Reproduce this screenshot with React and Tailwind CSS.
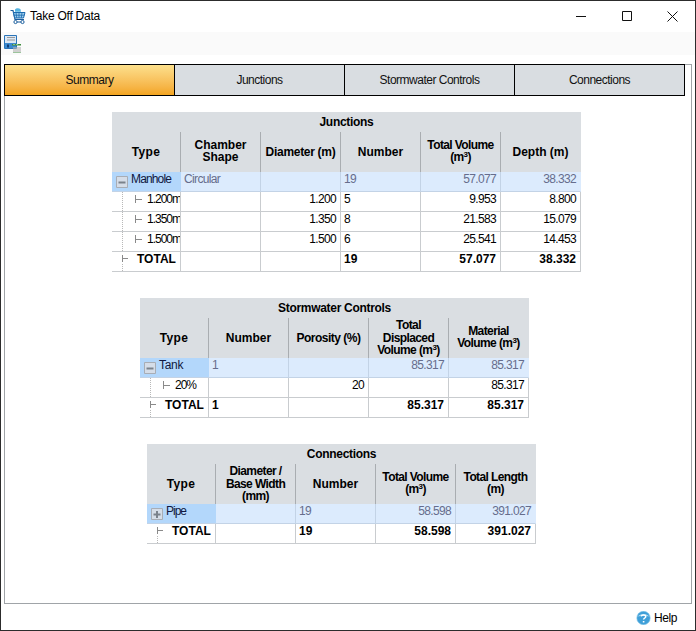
const CartIcon = () => (
  <svg width="16" height="17" viewBox="0 0 16 17" fill="none" className="shrink-0">
    <path d="M0.5 2.5H3L5 11.5H14" stroke="#1c5f9e" strokeWidth="1.2" />
    <path d="M3.5 4.5H15L13.5 10H4.7Z" fill="#9fd0ee" stroke="#1c6bb0" strokeWidth="1" />
    <path d="M6 4.5L6.8 10M9 4.5V10M12 4.5L11.3 10M4 7.2H14.3" stroke="#1c6bb0" strokeWidth="0.8" />
    <path d="M5 1.5C6 0 9 -0.2 10.5 1.2L11 3.8H5Z" fill="#56b4e0" />
    <circle cx="5.5" cy="14" r="1.6" fill="#fff" stroke="#1c5f9e" />
    <circle cx="12.5" cy="14" r="1.6" fill="#fff" stroke="#1c5f9e" />
    <path d="M7 14H11" stroke="#1c5f9e" />
  </svg>
);

const SaveIcon = () => (
  <svg width="18" height="18" viewBox="0 0 18 18" fill="none">
    <path d="M0.5 0.5H12.5V13.5H0.5Z" fill="#dce8f5" stroke="#2a74b8" />
    <path d="M1 8H12V13H1Z" fill="#3b8ad0" />
    <path d="M3 2.5H11M3 5H11" stroke="#9a9a9a" strokeWidth="1.2" />
    <path d="M3 9.5H5V12.5H3Z" fill="#123f78" />
    <path d="M8 9H17V10.5H8Z" fill="#3d8c3d" />
    <path d="M9.5 9.5H10.5M12.5 9.5H13.5" stroke="#d8f0d8" />
    <path d="M10 12V17M12 12V17M14 12V17M16 12V17" stroke="#b5b5b5" strokeWidth="1.2" />
    <path d="M9 17.5H17" stroke="#9cc49c" />
  </svg>
);

const HelpIcon = () => (
  <svg width="15" height="14" viewBox="0 0 15 14" fill="none" className="shrink-0">
    <circle cx="7.5" cy="7" r="6.7" fill="#3f9fd8" stroke="#7cc4ea" strokeWidth="0.6" />
    <path d="M2 5.5C3 2 12 2 13 5.5C10 4.5 5 4.5 2 5.5Z" fill="#a5d8f2" />
    <path d="M5.2 5.4C5.6 3.6 9.6 3.6 9.8 5.6C9.9 7 7.6 7 7.6 8.6" stroke="#fff" strokeWidth="1.5" />
    <path d="M6.8 10H8.4V11.5H6.8Z" fill="#fff" />
  </svg>
);

// caption buttons, each one a 46px slot like on Windows 10
const CaptionButtons = () => (
  <div className="ml-auto flex h-full">
    <div className="flex w-[46px] items-center justify-center pb-px">
      <svg width="10" height="10" viewBox="0 0 10 10" fill="none"><path d="M0 5.5H10" stroke="#111" /></svg>
    </div>
    <div className="flex w-[46px] items-center justify-center pb-px">
      <svg width="10" height="10" viewBox="0 0 10 10" fill="none"><path d="M0.5 0.5H9.5V9.5H0.5Z" stroke="#111" /></svg>
    </div>
    <div className="flex w-[45px] items-center justify-center pb-px">
      <svg width="11" height="11" viewBox="0 0 11 11" fill="none"><path d="M0.5 0.5L10.5 10.5M10.5 0.5L0.5 10.5" stroke="#111" /></svg>
    </div>
  </div>
);

// box with a minus or plus, first thing in a top level row
const Expander = ({ open }) => (
  <svg width="19" height="19" viewBox="0 0 19 19" fill="none" className="shrink-0">
    <path d="M4.5 4.5H15.5V15.5H4.5Z" fill="#d5dde8" stroke="#a8adb5" />
    <path d="M6.5 10.5H13.5" stroke="#7a828c" strokeWidth="2" />
    {!open && <path d="M10 7V14" stroke="#7a828c" strokeWidth="2" />}
  </svg>
);

const ChildGuide = () => (
  <svg width="35" height="19" viewBox="0 0 35 19" fill="none" className="shrink-0">
    <path d="M10.5 0V19" stroke="#b8b8b8" strokeDasharray="1 1" />
    <path d="M23.5 3V11M23.5 7.5H30" stroke="#8a8a8a" />
  </svg>
);

const TotalGuide = () => (
  <svg width="25" height="19" viewBox="0 0 25 19" fill="none" className="shrink-0">
    <path d="M10.5 3V10M10.5 6.5H16" stroke="#8a8a8a" />
    <path d="M10.5 12V19" stroke="#b8b8b8" strokeDasharray="1 1" />
  </svg>
);

const HeaderCell = ({ children, className = "" }) => (
  <div className={`flex h-10 items-center justify-center border-r border-[#a9adb1] bg-[#dadee2] text-center font-bold leading-[12.5px] text-black ${className}`}>
    <div>{children}</div>
  </div>
);

const Cell = ({ children, right, className = "" }) => (
  <div className={`h-5 border-r border-b border-[#c9cccf] pl-[3px] pr-1 leading-[15px] tracking-[-0.65px] ${right ? "text-right" : ""} ${className}`}>
    {children}
  </div>
);

const Cube = () => <sup className="text-[8px] leading-none">3</sup>;

const ParentRow = ({ label, labelClass = "tracking-[-0.85px]", open, cells }) => (
  <>
    <div className="flex h-5 border-b border-[#c3d3e6] bg-[#b3d7fb] text-[#101840]">
      <Expander open={open} />
      <span className={`leading-[15px] ${labelClass}`}>{label}</span>
    </div>
    {cells.map((c, i) => (
      <Cell key={i} right={c.right} className={`border-r-[#c3d3e6] border-b-[#c3d3e6] bg-[#dcebfd] text-[#666d8c] ${i === cells.length - 1 ? "border-r-[#dcebfd]" : ""}`}>
        {c.text}
      </Cell>
    ))}
  </>
);

const ChildRow = ({ label, cells }) => (
  <>
    <div className="flex h-5 overflow-hidden border-r border-b border-[#c9cccf] text-black">
      <ChildGuide />
      <span className="leading-[15px] tracking-[-1px]">{label}</span>
    </div>
    {cells.map((c, i) => (
      <Cell key={i} right={c.right} className="text-black">{c.text}</Cell>
    ))}
  </>
);

const TotalRow = ({ cells }) => (
  <>
    <div className="flex h-5 border-r border-b border-[#c9cccf] font-bold text-black">
      <TotalGuide />
      <span className="leading-[14px]">TOTAL</span>
    </div>
    {cells.map((c, i) => (
      <Cell key={i} right={c.right} className="font-bold leading-[14px] tracking-normal text-black">{c.text}</Cell>
    ))}
  </>
);

const Title = ({ children }) => (
  <div className="col-span-full flex h-5 items-center justify-center bg-[#dadee2] font-bold tracking-[-0.3px] text-black">
    {children}
  </div>
);

const R = (text) => ({ text, right: true });
const L = (text) => ({ text });

const Tabs = () => (
  <div className="-mt-px -ml-px flex">
    <div className="grid h-8 w-[681px] grid-cols-4 border-y border-l border-black tracking-[-0.5px] text-[#111]">
      <div className="flex items-center justify-center border-r border-black bg-gradient-to-b from-[#fce08c] to-[#f3a51f]">Summary</div>
      <div className="flex items-center justify-center border-r border-black bg-[#d9dde1]">Junctions</div>
      <div className="flex items-center justify-center border-r border-black bg-[#d9dde1]">Stormwater Controls</div>
      <div className="flex items-center justify-center border-r border-black bg-[#d9dde1]">Connections</div>
    </div>
  </div>
);

const App = () => {
  return (
    <div className="flex h-[631px] w-[696px] flex-col border border-[#2c2c2c] bg-white font-['Liberation_Sans',Arial,sans-serif] text-xs">
      <div className="flex h-[31px] items-center">
        <div className="ml-[9px]"><CartIcon /></div>
        <span className="mb-0.5 ml-[4px] tracking-[-0.25px] text-black">Take Off Data</span>
        <CaptionButtons />
      </div>

      <div className="flex h-[23px] items-center bg-[#fafafa] pl-[3px]">
        <SaveIcon />
      </div>

      <div className="mx-[3px] mt-[9px] flex h-[540px] flex-col border border-[#a0a4a8]">
        <Tabs />

        <div className="ml-[107px] mt-4 grid w-[469px] grid-cols-[69px_repeat(5,80px)]">
          <Title>Junctions</Title>
          <HeaderCell className="tracking-[0.3px]">Type</HeaderCell>
          <HeaderCell className="pb-0.5">Chamber<br />Shape</HeaderCell>
          <HeaderCell className="tracking-[-0.3px]">Diameter (m)</HeaderCell>
          <HeaderCell>Number</HeaderCell>
          <HeaderCell className="pb-0.5 tracking-[-0.6px]">Total Volume<br />(m<Cube />)</HeaderCell>
          <HeaderCell className="border-r-[#dadee2]">Depth (m)</HeaderCell>
          <ParentRow label="Manhole" open cells={[L("Circular"), L(""), L("19"), R("57.077"), R("38.332")]} />
          <ChildRow label="1.200m" cells={[L(""), R("1.200"), L("5"), R("9.953"), R("8.800")]} />
          <ChildRow label="1.350m" cells={[L(""), R("1.350"), L("8"), R("21.583"), R("15.079")]} />
          <ChildRow label="1.500m" cells={[L(""), R("1.500"), L("6"), R("25.541"), R("14.453")]} />
          <TotalRow cells={[L(""), L(""), L("19"), R("57.077"), R("38.332")]} />
        </div>

        <div className="ml-[135px] mt-[26px] grid w-[389px] grid-cols-[69px_repeat(4,80px)]">
          <Title>Stormwater Controls</Title>
          <HeaderCell className="tracking-[0.3px]">Type</HeaderCell>
          <HeaderCell>Number</HeaderCell>
          <HeaderCell className="tracking-[-0.5px]">Porosity (%)</HeaderCell>
          <HeaderCell className="tracking-[-0.6px]">Total<br />Displaced<br />Volume (m<Cube />)</HeaderCell>
          <HeaderCell className="border-r-[#dadee2] pb-0.5 tracking-[-0.6px]">Material<br />Volume (m<Cube />)</HeaderCell>
          <ParentRow label="Tank" labelClass="tracking-[-0.3px]" open cells={[L("1"), L(""), R("85.317"), R("85.317")]} />
          <ChildRow label="20%" cells={[L(""), R("20"), L(""), R("85.317")]} />
          <TotalRow cells={[L("1"), L(""), R("85.317"), R("85.317")]} />
        </div>

        <div className="ml-[142px] mt-[26px] grid w-[389px] grid-cols-[69px_repeat(4,80px)]">
          <Title>Connections</Title>
          <HeaderCell className="tracking-[0.3px]">Type</HeaderCell>
          <HeaderCell className="tracking-[-0.6px]">Diameter /<br />Base Width<br />(mm)</HeaderCell>
          <HeaderCell>Number</HeaderCell>
          <HeaderCell className="pb-0.5 tracking-[-0.6px]">Total Volume<br />(m<Cube />)</HeaderCell>
          <HeaderCell className="border-r-[#dadee2] pb-0.5 tracking-[-0.6px]">Total Length<br />(m)</HeaderCell>
          <ParentRow label="Pipe" labelClass="tracking-[-1px]" cells={[L(""), L("19"), R("58.598"), R("391.027")]} />
          <TotalRow cells={[L(""), L("19"), R("58.598"), R("391.027")]} />
        </div>
      </div>

      <div className="flex flex-1 items-center justify-end pr-[18px] pt-px text-black">
        <HelpIcon />
        <span className="ml-[3px] tracking-[-0.4px]">Help</span>
      </div>
    </div>
  );
};

export default App;
